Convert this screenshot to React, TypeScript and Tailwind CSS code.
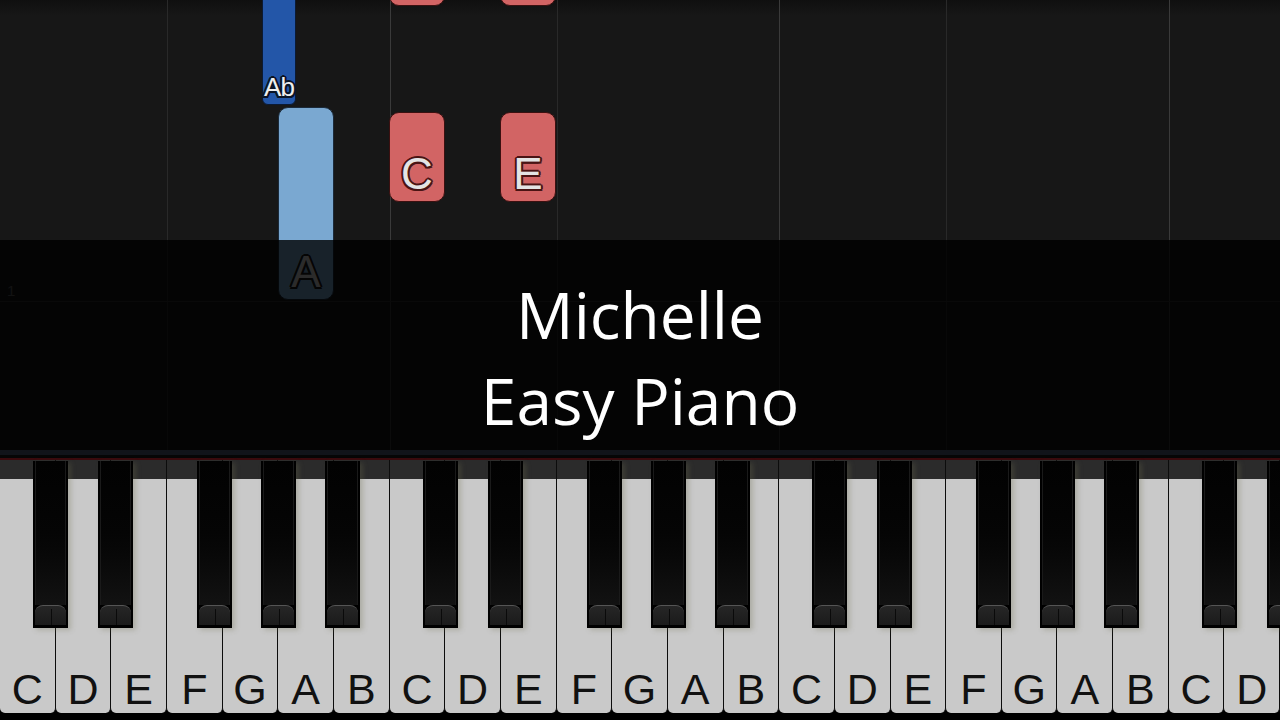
const W = 1280 / 23;
const whiteNames = ['C', 'D', 'E', 'F', 'G', 'A', 'B'];
const whiteKeys = Array.from({ length: 23 }, (_, i) => whiteNames[i % 7]);

// black key left edges, in white-key widths, within one octave
const blackOffsets = [0.593, 1.761, 3.54, 4.69, 5.84];
const blackKeys: number[] = [];
for (let oct = 0; oct < 4; oct++) {
  for (const o of blackOffsets) {
    const x = (oct * 7 + o) * W;
    if (x < 1280) blackKeys.push(Math.round(x));
  }
}

// bar lines on the roll
const lines = [
  { x: 3 * W, strong: false },
  { x: 7 * W, strong: true },
  { x: 10 * W, strong: false },
  { x: 14 * W, strong: true },
  { x: 17 * W, strong: false },
  { x: 21 * W, strong: true },
];

const redShadow =
  '[text-shadow:-2px_0_#4a1414,2px_0_#4a1414,0_-2px_#4a1414,0_2px_#4a1414,-1.5px_-1.5px_#4a1414,1.5px_1.5px_#4a1414,-1.5px_1.5px_#4a1414,1.5px_-1.5px_#4a1414]';

const PianoRoll = () => {
  return (
    <div className="relative h-[450px] bg-[#171717] overflow-hidden">
      {/* darker top edge */}
      <div className="absolute inset-x-0 top-0 h-[16px] bg-gradient-to-b from-[#0f0f0f] to-[#171717]" />

      {/* bar lines */}
      {lines.map((l) => (
        <div
          key={l.x}
          className={l.strong ? 'absolute top-0 bottom-0 w-px bg-[#3a3a3a]' : 'absolute top-0 bottom-0 w-px bg-[#292929]'}
          style={{ left: Math.round(l.x) }}
        />
      ))}

      {/* measure marker */}
      <div className="absolute left-0 right-0 top-[301px] h-px bg-[#303030]" />
      <div className="absolute left-[7px] top-[280px] text-[15px] text-[#5a5a5a] font-['Liberation_Sans',sans-serif]">1</div>

      {/* notes leaving the top */}
      <div className="absolute left-[389px] top-[-30px] w-[56px] h-[36px] rounded-[10px] bg-[#d26464] border border-[#3b1010]" />
      <div className="absolute left-[500px] top-[-30px] w-[56px] h-[36px] rounded-[10px] bg-[#d26464] border border-[#3b1010]" />

      {/* Ab */}
      <div className="absolute left-[262px] top-[-10px] w-[34px] h-[115px] rounded-[6px] bg-[#2356a8] border border-[#0b1a33] flex items-end justify-center pb-[4px]">
        <span className="text-[26px] leading-[26px] text-[#eeeeee] font-['Liberation_Sans',sans-serif] tracking-[-1px] [text-shadow:-2px_0_#0a1426,2px_0_#0a1426,0_-2px_#0a1426,0_2px_#0a1426,-1.5px_-1.5px_#0a1426,1.5px_1.5px_#0a1426,-1.5px_1.5px_#0a1426,1.5px_-1.5px_#0a1426]">
          Ab
        </span>
      </div>

      {/* A */}
      <div className="absolute left-[278px] top-[107px] w-[56px] h-[193px] rounded-[10px] bg-[#7aa8d1] border border-[#1b2a3a] flex items-end justify-center pb-[5px]">
        <span className="text-[44px] leading-[44px] text-[#d6d6d6] font-['Liberation_Sans',sans-serif] [text-shadow:-2px_0_#1a1a1a,2px_0_#1a1a1a,0_-2px_#1a1a1a,0_2px_#1a1a1a,-1.5px_-1.5px_#1a1a1a,1.5px_1.5px_#1a1a1a,-1.5px_1.5px_#1a1a1a,1.5px_-1.5px_#1a1a1a]">
          A
        </span>
      </div>

      {/* C */}
      <div className="absolute left-[389px] top-[112px] w-[56px] h-[90px] rounded-[10px] bg-[#d26464] border border-[#3b1010] flex items-end justify-center pb-[5px]">
        <span className={`text-[44px] leading-[44px] text-[#e4e4e4] font-['Liberation_Sans',sans-serif] ${redShadow}`}>C</span>
      </div>

      {/* E */}
      <div className="absolute left-[500px] top-[112px] w-[56px] h-[90px] rounded-[10px] bg-[#d26464] border border-[#3b1010] flex items-end justify-center pb-[5px]">
        <span className={`text-[44px] leading-[44px] text-[#e4e4e4] font-['Liberation_Sans',sans-serif] ${redShadow}`}>E</span>
      </div>

      {/* Title Overlay */}
      <div className="absolute inset-x-0 top-[240px] bottom-0 bg-black/80 flex flex-col items-center pt-[32px]">
        <h1 className="text-[64px] leading-[86px] text-white font-['Open_Sans',sans-serif] font-normal">Michelle</h1>
        <p className="text-[64px] leading-[86px] text-white font-['Open_Sans',sans-serif] font-normal">Easy Piano</p>
      </div>
    </div>
  );
};

const Keyboard = () => {
  return (
    <div className="flex flex-col">
      {/* rail */}
      <div className="h-[5px] bg-[#11141a]" />
      <div className="h-[3px] bg-[#060606]" />
      <div className="h-[2px] bg-[#3a0a0d]" />

      <div className="relative h-[260px] bg-black">
        {/* white keys */}
        <div className="flex h-[253px]">
          {whiteKeys.map((name, i) => (
            <div
              key={i}
              className="flex-1 flex flex-col bg-[#c9c9c9] border-r border-[#0c0c0c] rounded-b-[5px] overflow-hidden"
            >
              <div className="h-[19px] bg-[#2b2b2b]" />
              <div className="flex-1 flex items-end justify-center pb-[3px]">
                <span className="text-[43px] leading-[42px] text-[#111] font-['Liberation_Sans',sans-serif]">{name}</span>
              </div>
            </div>
          ))}
        </div>

        {/* black keys */}
        {blackKeys.map((x) => (
          <div
            key={x}
            className="absolute top-[1px] w-[35px] h-[167px] bg-black px-[2px] pb-[3px] flex flex-col shadow-[3px_2px_5px_rgba(110,110,80,0.3)]"
            style={{ left: x }}
          >
            <div className="flex-1 bg-gradient-to-b from-[#020202] via-[#050505] to-[#121212] border-x border-[#1a1a1a]" />
            <div className="relative h-[20px] rounded-t-[8px] border-t border-[#555] bg-gradient-to-b from-[#262626] to-[#1b1b1b]">
              <div className="absolute left-1/2 top-[3px] bottom-0 w-px bg-[#0a0a0a]" />
            </div>
          </div>
        ))}
      </div>
    </div>
  );
};

const App = () => {
  return (
    <div className="w-[1280px] h-[720px] bg-black overflow-hidden flex flex-col">
      <PianoRoll />
      <Keyboard />
    </div>
  );
};

export default App;
